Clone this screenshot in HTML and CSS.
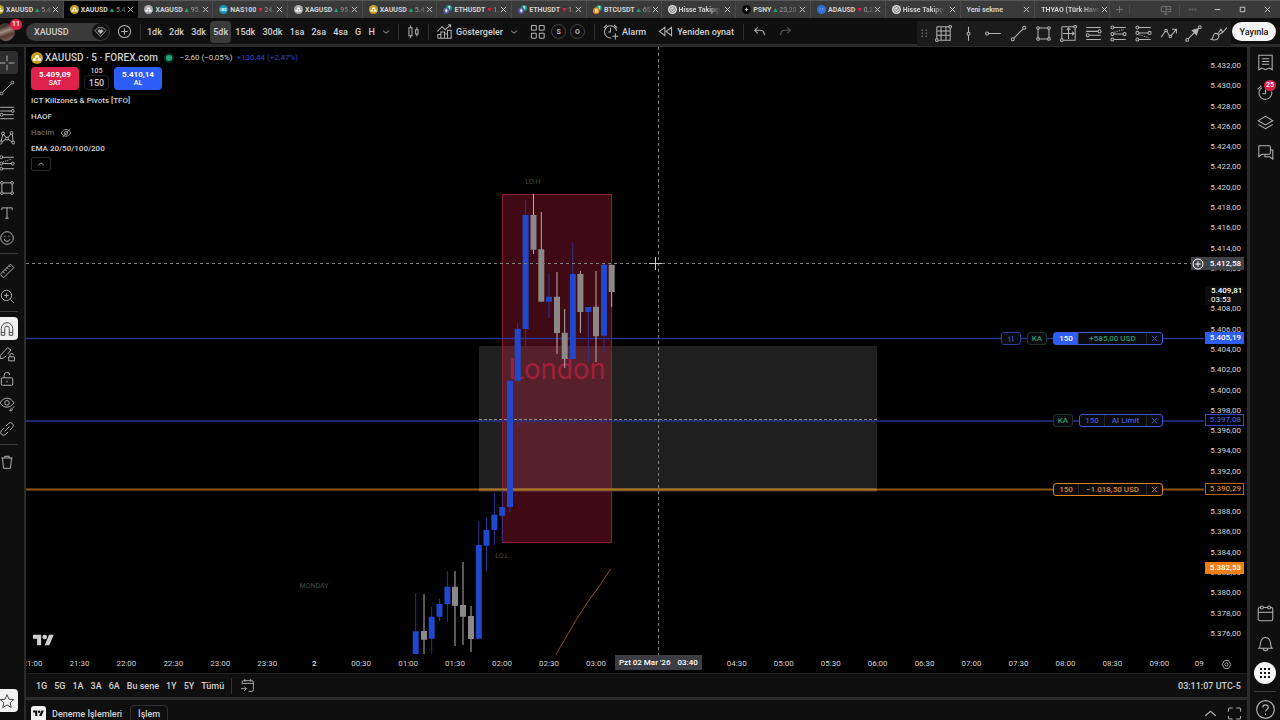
FILE: index.html
```html
<!DOCTYPE html>
<html lang="tr">
<head>
<meta charset="utf-8">
<title>XAUUSD</title>
<link rel="stylesheet" href="styles.css">
</head>
<body>
<svg class="sprite" aria-hidden="true">
  <symbol id="i-x" viewBox="0 0 10 10"><path d="M2 2l6 6M8 2l-6 6"/></symbol>
  <symbol id="i-chev" viewBox="0 0 10 10"><path d="M1.500 3.500L5 6.500l3.500-3"/></symbol>
  <symbol id="i-up" viewBox="0 0 10 10"><path d="M1.500 6.500L5 3.500l3.500 3"/></symbol>
  <symbol id="i-swap" viewBox="0 0 10 10"><path d="M3 9V2L1.500 3.500M7 1v7l1.500-1.500"/></symbol>
  <symbol id="i-gold" viewBox="0 0 18 18"><circle cx="9" cy="9" r="9" fill="#c8a021" stroke="none"/><path d="M7 5h4l1.500 3.500h-7zM3.500 9.500h4L9 13H2.500zM10.500 9.500h4l1 3.500H9.500z" fill="#fff" stroke="none"/></symbol>
  <symbol id="i-silver" viewBox="0 0 18 18"><circle cx="9" cy="9" r="9" fill="#a9a9ab" stroke="none"/><path d="M7 5h4l1.500 3.500h-7zM3.500 9.500h4L9 13H2.500zM10.500 9.500h4l1 3.500H9.500z" fill="#fff" stroke="none"/></symbol>
  <symbol id="i-nas" viewBox="0 0 18 18"><circle cx="9" cy="9" r="9" fill="#1298b4" stroke="none"/><path d="M4 6.500v5M6.500 6.500h2.500v5H6.500zM11.500 6.500H14v5h-2.500z" stroke="#fff" stroke-width="1.500"/></symbol>
  <symbol id="i-eth" viewBox="0 0 18 18"><circle cx="12" cy="6" r="6" fill="#1b9c80" stroke="none"/><path d="M10 3.500h5M12.500 3.500v5" stroke="#fff" stroke-width="1.500"/><circle cx="6.500" cy="11.500" r="6.500" fill="#51549c" stroke="none"/><path d="M6.500 6.500l3 5-3 4-3-4z" fill="#e4e4f2" stroke="none"/></symbol>
  <symbol id="i-btc" viewBox="0 0 18 18"><circle cx="12" cy="6" r="6" fill="#1b9c80" stroke="none"/><path d="M10 3.500h5M12.500 3.500v5" stroke="#fff" stroke-width="1.500"/><circle cx="6.500" cy="11.500" r="6.500" fill="#e08a20" stroke="none"/><path d="M5 8.500v6h2.500a1.500 1.500 0 0 0 0-3H5h2.200a1.500 1.500 0 0 0 0-3z" stroke="#fff" stroke-width="1.300"/></symbol>
  <symbol id="i-site" viewBox="0 0 18 18"><circle cx="9" cy="9" r="9" fill="#d8d8d8" stroke="none"/><circle cx="9" cy="9" r="5.500" stroke="#333"/><path d="M6.500 9l2 2 3.500-4" stroke="#333" stroke-width="1.500"/></symbol>
  <symbol id="i-psny" viewBox="0 0 18 18"><circle cx="9" cy="9" r="9" fill="#090909" stroke="none"/><path d="M9 4l1.200 3.800L14 9l-3.800 1.200L9 14l-1.200-3.800L4 9l3.800-1.200z" fill="#ddd" stroke="none"/></symbol>
  <symbol id="i-ada" viewBox="0 0 18 18"><circle cx="9" cy="9" r="9" fill="#2f6fd4" stroke="none"/><circle cx="9" cy="9" r="3" stroke="#9cc0ff" stroke-dasharray="1.500 2" stroke-width="2"/></symbol>
  <symbol id="i-tv" viewBox="0 0 36 28"><path d="M14 22H7V11H0V4h14zM28 22h-8l7.500-18h8z" fill="currentColor" stroke="none"/><circle cx="20" cy="8" r="4" fill="currentColor" stroke="none"/></symbol>

  <symbol id="i-cross" viewBox="0 0 28 28"><path d="M14 1v10M14 17v10M1 14h10M17 14h10"/></symbol>
  <symbol id="i-line" viewBox="0 0 28 28"><circle cx="4.500" cy="23.500" r="2.500"/><circle cx="23.500" cy="4.500" r="2.500"/><path d="M6.500 21.500l15-15"/></symbol>
  <symbol id="i-fib" viewBox="0 0 28 28"><path d="M2 4h24M2 10.500h20M7 17h19M2 24h24" /><circle cx="4.500" cy="17" r="2.500"/><circle cx="24" cy="10.500" r="2.500"/></symbol>
  <symbol id="i-pattern" viewBox="0 0 28 28"><path d="M3 22L7 7l7 8 9-10 2 17-11-7z"/><circle cx="3" cy="22" r="2.500" fill="#0f0f0f"/><circle cx="7" cy="6" r="2.500" fill="#0f0f0f"/><circle cx="14" cy="15" r="2.500" fill="#0f0f0f"/><circle cx="22" cy="5" r="2.500" fill="#0f0f0f"/><circle cx="25" cy="22" r="2.500" fill="#0f0f0f"/></symbol>
  <symbol id="i-proj" viewBox="0 0 28 28"><path d="M6 4h20M6 15h16M6 24h20"/><path d="M7 12l16-5" stroke-dasharray="2 2"/><circle cx="4" cy="4" r="2.500"/><circle cx="4" cy="15" r="2.500"/><circle cx="24" cy="15" r="2.500"/><circle cx="4" cy="24" r="2.500"/></symbol>
  <symbol id="i-proj2" viewBox="0 0 28 28"><path d="M6 4h20M6 13h16M6 24h20"/><path d="M7 16l16 5" stroke-dasharray="2 2"/><circle cx="4" cy="4" r="2.500"/><circle cx="4" cy="13" r="2.500"/><circle cx="24" cy="13" r="2.500"/><circle cx="4" cy="24" r="2.500"/></symbol>
  <symbol id="i-rect" viewBox="0 0 28 28"><path d="M7 5h14M7 23h14M5 7v14M23 7v14"/><circle cx="5" cy="5" r="2.200"/><circle cx="23" cy="5" r="2.200"/><circle cx="5" cy="23" r="2.200"/><circle cx="23" cy="23" r="2.200"/></symbol>
  <symbol id="i-text" viewBox="0 0 28 28"><path d="M5 9V5h18v4M14 5v18M11 23h6"/></symbol>
  <symbol id="i-smile" viewBox="0 0 28 28"><circle cx="14" cy="14" r="11"/><path d="M9 16c1 5 9 5 10 0M10.500 10v2M17.500 10v2"/></symbol>
  <symbol id="i-ruler" viewBox="0 0 28 28"><path d="M2 20L20 2l6 6L8 26zM7 15l3 3M10.500 11.500l2.500 2.500M14 8l3 3M17.500 4.500L20 7"/></symbol>
  <symbol id="i-zoom" viewBox="0 0 28 28"><circle cx="13" cy="13" r="9"/><path d="M20 20l6 6M9 13h8M13 9v8"/></symbol>
  <symbol id="i-magnet" viewBox="0 0 28 28"><path d="M4 25V13a10 10 0 0 1 20 0v12h-6V13a4 4 0 0 0-8 0v12zM4 20h6M18 20h6"/></symbol>
  <symbol id="i-penlock" viewBox="0 0 28 28"><path d="M13 17l-5 4-6 1 0-5L15 3l6 4-6 7M17 19h10v7H17zM19 19v-3a3 3 0 0 1 6 0"/></symbol>
  <symbol id="i-lock" viewBox="0 0 28 28"><rect x="4" y="12" width="20" height="13" rx="2"/><path d="M9 12V8a5 5 0 0 1 10-1M14 17v3" /></symbol>
  <symbol id="i-eye" viewBox="0 0 28 28"><path d="M2 12c6-11 18-11 24 0-6 10-18 10-24 0z"/><circle cx="14" cy="12" r="4"/><path d="M19 26c0-4 3-4 4-3s1 3-4 3zM23 22l4-4"/></symbol>
  <symbol id="i-link" viewBox="0 0 28 28"><path d="M12 9l5-5a5 5 0 0 1 7 7l-5 5M16 19l-5 5a5 5 0 0 1-7-7l5-5M10 18l8-8"/></symbol>
  <symbol id="i-trash" viewBox="0 0 28 28"><path d="M4 7h20M10 7V4h8v3M6 7l2 18h12l2-18"/></symbol>
  <symbol id="i-star" viewBox="0 0 28 28"><path d="M14 3l3.500 8 8.500.5-6.500 5.500 2 8.500L14 21l-7.500 4.500 2-8.500L2 11.500l8.500-.5z"/></symbol>

  <symbol id="i-heart" viewBox="0 0 28 28"><path d="M8 6h12l6 6-12 13L2 12z"/><path d="M14 19l-5-5a2.500 2.500 0 0 1 5-2 2.500 2.500 0 0 1 5 2z" fill="currentColor"/></symbol>
  <symbol id="i-plus" viewBox="0 0 28 28"><circle cx="14" cy="14" r="10"/><path d="M14 8.500v11M8.500 14h11"/></symbol>
  <symbol id="i-candles" viewBox="0 0 28 28"><path d="M6.500 8h5v13h-5zM9 4v4M9 21v4M17.500 11h4v7h-4zM19.500 7v4M19.500 18v4"/></symbol>
  <symbol id="i-ind" viewBox="0 0 28 28"><path d="M2 14l8-8 5 5 9-8M20 3h4v4M3 25v-6h5v6M8 25V15h6v10M14 25v-7h5v7M19 25V12h6v13zM3 25h22"/></symbol>
  <symbol id="i-layout" viewBox="0 0 28 28"><rect x="4" y="4" width="8" height="8" rx="1"/><rect x="17" y="4" width="8" height="8" rx="1"/><rect x="4" y="17" width="8" height="8" rx="1"/><rect x="17" y="17" width="8" height="8" rx="1"/></symbol>
  <symbol id="i-alarm" viewBox="0 0 28 28"><path d="M24 13A10 10 0 1 0 15 24.500M14 8v7h-4M3 8l5-5M25 8l-5-5M22 17v10M17 22h10"/></symbol>
  <symbol id="i-replay" viewBox="0 0 28 28"><path d="M13 7v14l-9-7zM24 7v14l-9-7z"/></symbol>
  <symbol id="i-undo" viewBox="0 0 28 28"><path d="M11 7l-5 5 5 5M6 12h9c5 0 7 3 7 8"/></symbol>
  <symbol id="i-redo" viewBox="0 0 28 28"><path d="M17 7l5 5-5 5M22 12h-9c-5 0-7 3-7 8"/></symbol>
  <symbol id="i-drag" viewBox="0 0 28 28"><g fill="currentColor" stroke="none"><path d="M9 6h3v3H9zM17 6h3v3h-3zM9 12h3v3H9zM17 12h3v3h-3zM9 18h3v3H9zM17 18h3v3h-3z"/></g></symbol>
  <symbol id="i-grid" viewBox="0 0 28 28"><path d="M3 3h20M3 10h23M3 17h23M6 25h20M3 3v20M10 3v22M18 3v22M25 6v19"/><circle cx="25" cy="3" r="2.200"/><circle cx="3" cy="25" r="2.200"/></symbol>
  <symbol id="i-vline" viewBox="0 0 28 28"><path d="M14 3v9M14 17v9"/><circle cx="14" cy="14.500" r="2.500"/></symbol>
  <symbol id="i-hline" viewBox="0 0 28 28"><path d="M6 14h20"/><circle cx="3.500" cy="14" r="2.500"/></symbol>
  <symbol id="i-range" viewBox="0 0 28 28"><path d="M3 3h20M25 6v19H6M3 3v20M14 5v18M5 14h18M11 8l3-3 3 3M20 11l3 3-3 3"/><circle cx="25" cy="3" r="2.200"/><circle cx="3" cy="25" r="2.200"/></symbol>
  <symbol id="i-zig" viewBox="0 0 28 28"><path d="M2 20l7-10M11 10l5 8M18 18l8-10M20 7h7v7"/><circle cx="10" cy="9" r="2"/><circle cx="17" cy="19" r="2"/></symbol>
  <symbol id="i-arrow" viewBox="0 0 28 28"><path d="M5 23L18 10"/><circle cx="3.500" cy="24.500" r="2.200"/><circle cx="24.500" cy="3.500" r="2.200"/><path d="M22 6l-3 10-7-7z" fill="currentColor"/></symbol>
  <symbol id="i-brush" viewBox="0 0 28 28"><path d="M2 24c4-2 2-8 6-10 4-1 8 3 6 7-2 4-8 4-12 3zM13 14L18 7l3 5 7-8M14 16l7-4"/></symbol>
  <symbol id="i-list" viewBox="0 0 28 28"><path d="M3 2h22v24l-5-3-6 3-6-3-5 3zM8 8h12M8 12.500h12M8 17h12"/></symbol>
  <symbol id="i-clock" viewBox="0 0 28 28"><path d="M8 6a10.500 10.500 0 1 0 16 6M14 9v7H9M1 9l6-6"/></symbol>
  <symbol id="i-layers" viewBox="0 0 28 28"><path d="M14 4l12 7-12 7L2 11zM2 17l12 7 12-7"/></symbol>
  <symbol id="i-chat" viewBox="0 0 28 28"><path d="M4 3h16a2 2 0 0 1 2 2v10a2 2 0 0 1-2 2H8l-5 4V5a2 2 0 0 1 1-2zM22 10h4v15l-5-4h-8v-4"/></symbol>
  <symbol id="i-cal" viewBox="0 0 28 28"><rect x="2" y="4" width="24" height="22" rx="3"/><path d="M2 12h24"/><circle cx="8" cy="4" r="2.500" fill="#0f0f0f"/><circle cx="20" cy="4" r="2.500" fill="#0f0f0f"/></symbol>
  <symbol id="i-bell" viewBox="0 0 28 28"><path d="M3 22c3-3 2-6 3-10 1-5 4-8 8-8s7 3 8 8 0 7 3 10zM10 23c1 4 7 4 8 0"/></symbol>
  <symbol id="i-apps" viewBox="0 0 28 28"><g fill="#111" stroke="none"><path d="M4 4h4v4H4zM12 4h4v4h-4zM20 4h4v4h-4zM4 12h4v4H4zM12 12h4v4h-4zM20 12h4v4h-4zM4 20h4v4H4zM12 20h4v4h-4zM20 20h4v4h-4z"/></g></symbol>
  <symbol id="i-help" viewBox="0 0 28 28"><circle cx="14" cy="14" r="13"/><path d="M10 11c0-5 8-5 8 0 0 3-4 3-4 6M14 20v2"/></symbol>
  <symbol id="i-hide" viewBox="0 0 28 28"><path d="M3 14c5-11 17-11 22 0-5 10-17 10-22 0zM6 24L24 4"/><circle cx="14" cy="14" r="4"/></symbol>
  <symbol id="i-goto" viewBox="0 0 28 28"><path d="M4 12V7a2 2 0 0 1 2-2h16a3 3 0 0 1 3 3v14a3 3 0 0 1-3 3h-6M5 10h20M9 2v5M20 2v5M2 20h10M8 16l4 4-4 4"/></symbol>
  <symbol id="i-gear" viewBox="0 0 28 28"><path d="M9 4h10l6 10-6 10H9L3 14z"/><circle cx="14" cy="14" r="4"/></symbol>
  <symbol id="i-full" viewBox="0 0 28 28"><path d="M4 11V7a2 2 0 0 1 2-2h5M17 5h5a2 2 0 0 1 2 2v4M24 18v3a2 2 0 0 1-2 2h-5M11 23H6a2 2 0 0 1-2-2v-3"/></symbol>
  <symbol id="i-mon" viewBox="0 0 28 28"><path d="M14 18H3V6h22v12h-8M14 6v18M10 24h8M14 12h11"/></symbol>
  <symbol id="i-dots" viewBox="0 0 28 28"><circle cx="5" cy="14" r="2.500"/><circle cx="14" cy="14" r="2.500"/><circle cx="23" cy="14" r="2.500"/></symbol>
</svg>

<nav class="tabs">
  <div class="tab-list">
    <a class="tab" href="#"><svg class="logo"><use href="#i-gold"/></svg><b>XAUUSD</b><i class="up">▲</i><em>5.4</em><svg class="x"><use href="#i-x"/></svg></a>
    <a class="tab on" href="#"><svg class="logo"><use href="#i-gold"/></svg><b>XAUUSD</b><i class="up">▲</i><em>5.4</em><svg class="x"><use href="#i-x"/></svg></a>
    <a class="tab" href="#"><svg class="logo"><use href="#i-silver"/></svg><b>XAGUSD</b><i class="up">▲</i><em>95.</em><svg class="x"><use href="#i-x"/></svg></a>
    <a class="tab" href="#"><svg class="logo"><use href="#i-nas"/></svg><b>NAS100</b><i class="down">▼</i><em>24.</em><svg class="x"><use href="#i-x"/></svg></a>
    <a class="tab" href="#"><svg class="logo"><use href="#i-silver"/></svg><b>XAGUSD</b><i class="up">▲</i><em>95.</em><svg class="x"><use href="#i-x"/></svg></a>
    <a class="tab" href="#"><svg class="logo"><use href="#i-gold"/></svg><b>XAUUSD</b><i class="up">▲</i><em>5.4</em><svg class="x"><use href="#i-x"/></svg></a>
    <a class="tab" href="#"><svg class="logo"><use href="#i-eth"/></svg><b>ETHUSDT</b><i class="down">▼</i><em>1.</em><svg class="x"><use href="#i-x"/></svg></a>
    <a class="tab" href="#"><svg class="logo"><use href="#i-eth"/></svg><b>ETHUSDT</b><i class="down">▼</i><em>1.</em><svg class="x"><use href="#i-x"/></svg></a>
    <a class="tab" href="#"><svg class="logo"><use href="#i-btc"/></svg><b>BTCUSDT</b><i class="up">▲</i><em>65</em><svg class="x"><use href="#i-x"/></svg></a>
    <a class="tab" href="#"><svg class="logo"><use href="#i-site"/></svg><b class="fade">Hisse Takipçi</b><svg class="x"><use href="#i-x"/></svg></a>
    <a class="tab" href="#"><svg class="logo"><use href="#i-psny"/></svg><b>PSNY</b><i class="up">▲</i><em>23,28</em><svg class="x"><use href="#i-x"/></svg></a>
    <a class="tab" href="#"><svg class="logo"><use href="#i-ada"/></svg><b>ADAUSD</b><i class="down">▼</i><em>0,2</em><svg class="x"><use href="#i-x"/></svg></a>
    <a class="tab" href="#"><svg class="logo"><use href="#i-site"/></svg><b class="fade">Hisse Takipçi</b><svg class="x"><use href="#i-x"/></svg></a>
    <a class="tab" href="#"><b>Yeni sekme</b><svg class="x"><use href="#i-x"/></svg></a>
    <a class="tab" href="#"><b class="fade">THYAO (Türk Hava</b><svg class="x"><use href="#i-x"/></svg></a>
  </div>
  <div class="win">
    <button aria-label="Yeni sekme aç" class="dim"><svg viewBox="0 0 10 10"><path d="M5 1v8M1 5h8"/></svg></button>
    <button aria-label="Ekran" class="dim mon"><svg><use href="#i-mon"/></svg></button>
    <button aria-label="Diğer" class="dim"><svg><use href="#i-dots"/></svg></button>
    <button aria-label="Küçült"><svg viewBox="0 0 10 10"><path d="M2 5h6"/></svg></button>
    <button aria-label="Büyüt"><svg viewBox="0 0 10 10"><path d="M2.500 2.500h5v5h-5z"/></svg></button>
    <button aria-label="Kapat"><svg><use href="#i-x"/></svg></button>
  </div>
</nav>

<header class="top">
  <button class="avatar" aria-label="Profil"><span>11</span></button>
  <button class="search">XAUUSD<svg class="ic"><use href="#i-heart"/></svg></button>
  <button class="tb plus" aria-label="Karşılaştır"><svg class="ic"><use href="#i-plus"/></svg></button>
  <span class="sep"></span>
  <div class="ints">
    <button>1dk</button><button>2dk</button><button>3dk</button><button class="on">5dk</button><button>15dk</button><button>30dk</button><button>1sa</button><button>2sa</button><button>4sa</button><button>G</button><button>H</button>
    <button class="more" aria-label="Aralıklar"><svg class="chev"><use href="#i-chev"/></svg></button>
  </div>
  <span class="sep"></span>
  <button class="tb wide" aria-label="Mumlar"><svg class="ic"><use href="#i-candles"/></svg></button>
  <span class="sep"></span>
  <button class="tb ind"><svg class="ic"><use href="#i-ind"/></svg>Göstergeler</button>
  <button class="tb small" aria-label="Favoriler"><svg class="chev"><use href="#i-chev"/></svg></button>
  <button class="tb small" aria-label="Şablonlar"><svg class="ic"><use href="#i-layout"/></svg></button>
  <button class="ring">S</button><button class="ring">O</button>
  <span class="sep gap"></span>
  <button class="tb"><svg class="ic"><use href="#i-alarm"/></svg>Alarm</button>
  <button class="tb replay"><svg class="ic"><use href="#i-replay"/></svg>Yeniden oynat</button>
  <span class="sep"></span>
  <button class="tb undo" aria-label="Geri al"><svg class="ic"><use href="#i-undo"/></svg></button>
  <button class="tb dim" aria-label="Yinele"><svg class="ic"><use href="#i-redo"/></svg></button>
  <div class="draw">
    <svg class="ic drag"><use href="#i-drag"/></svg>
    <button aria-label="Izgara"><svg class="ic"><use href="#i-grid"/></svg></button>
    <button aria-label="Dikey çizgi"><svg class="ic"><use href="#i-vline"/></svg></button>
    <button aria-label="Yatay ışın"><svg class="ic"><use href="#i-hline"/></svg></button>
    <button aria-label="Trend çizgisi"><svg class="ic"><use href="#i-line"/></svg></button>
    <button aria-label="Dikdörtgen"><svg class="ic"><use href="#i-rect"/></svg></button>
    <button aria-label="Fiyat aralığı"><svg class="ic"><use href="#i-range"/></svg></button>
    <button aria-label="Fib"><svg class="ic"><use href="#i-fib"/></svg></button>
    <button aria-label="Uzun pozisyon"><svg class="ic"><use href="#i-proj"/></svg></button>
    <button aria-label="Kısa pozisyon"><svg class="ic"><use href="#i-proj2"/></svg></button>
    <button aria-label="Yol"><svg class="ic"><use href="#i-zig"/></svg></button>
    <button aria-label="Ok"><svg class="ic"><use href="#i-arrow"/></svg></button>
    <button aria-label="Fırça"><svg class="ic"><use href="#i-brush"/></svg></button>
  </div>
  <button class="publish">Yayınla</button>
</header>

<div class="body">
  <aside class="left">
    <button class="hov" aria-label="İmleç"><svg class="ic"><use href="#i-cross"/></svg></button>
    <button aria-label="Çizgiler"><svg class="ic"><use href="#i-line"/></svg></button>
    <button aria-label="Fibonacci"><svg class="ic"><use href="#i-fib"/></svg></button>
    <button aria-label="Formasyonlar"><svg class="ic"><use href="#i-pattern"/></svg></button>
    <button aria-label="Tahmin"><svg class="ic"><use href="#i-proj"/></svg></button>
    <button aria-label="Şekiller"><svg class="ic"><use href="#i-rect"/></svg></button>
    <button aria-label="Metin"><svg class="ic"><use href="#i-text"/></svg></button>
    <button aria-label="İkonlar"><svg class="ic"><use href="#i-smile"/></svg></button>
    <hr>
    <button aria-label="Ölç"><svg class="ic"><use href="#i-ruler"/></svg></button>
    <button aria-label="Yakınlaştır"><svg class="ic"><use href="#i-zoom"/></svg></button>
    <hr>
    <button class="white" aria-label="Mıknatıs"><svg class="ic"><use href="#i-magnet"/></svg></button>
    <button aria-label="Çizim modu"><svg class="ic"><use href="#i-penlock"/></svg></button>
    <button aria-label="Kilitle"><svg class="ic"><use href="#i-lock"/></svg></button>
    <button aria-label="Gizle"><svg class="ic"><use href="#i-eye"/></svg></button>
    <button aria-label="Bağla"><svg class="ic"><use href="#i-link"/></svg></button>
    <hr>
    <button aria-label="Sil"><svg class="ic"><use href="#i-trash"/></svg></button>
    <button class="white last" aria-label="Favori"><svg class="ic"><use href="#i-star"/></svg></button>
  </aside>

  <div class="center">
    <main class="chart">
      <div class="plot">
        <svg class="canvas" role="img" aria-label="XAUUSD grafiği">
          <g transform="translate(-26 -47)">
            <rect class="band" x="479" y="346" width="398" height="146"/>
            <rect class="zone" x="502.500" y="194.500" width="109" height="348"/>
            <text class="london" x="557" y="379">London</text>
            <path class="pos" d="M26 338.500H4000M26 421H4000"/>
            <path class="stop" d="M26 489.500H4000"/>
            <path class="stop-hi" d="M479 489.500H877"/>
            <path class="mid" d="M479 419.500H877"/>
            <path class="wick-b" d="M415.700 593V654M431.700 607V654M439.500 599V621M447.400 571V622M478.800 521V639M486.500 518V571M494.400 493V545M502.200 490V543M510 380V512M517.700 323V428M525.600 200V346M549 273V318M572.800 243V359M588.300 307V362M604 263V352"/>
            <path class="wick-g" d="M424 594V654M455 571V646M463 562V645M471 606V652M533.500 194V254M541.300 212V301M557 272V354M564.700 309V368M580.400 271V333M596 271V362M611.700 265V307"/>
            <path class="bar-b" d="M415.700 631.300V654M431.700 616.700V638.700M439.500 604V616.700M447.400 586.700V604.300M478.800 545V638.700M486.500 530V545.700M494.400 514.700V530M502.200 507V515.700M510 380.700V507M517.700 328.700V380.700M525.600 215V329M549 296.700V301.700M572.800 274V359M588.300 307V312M604 264.700V335.700"/>
            <path class="bar-g" d="M424 631V639.700M455 586.700V605.700M463 605V616.700M471 616V639M533.500 215V249.700M541.300 249.300V301.700M557 296.700V333M564.700 332.700V359M580.400 274V312M596 306.700V336.300M611.700 264.700V292"/>
            <path class="ema" d="M556 654.500L576 620 589 600 598 588 611 568.500"/>
            <path class="dash" d="M26 263.500H4000M658.500 47V2000"/>
            <path class="cursor" d="M655.500 257v13M649 263.500h13"/>
            <text class="note" x="533" y="184">LO.H</text>
            <text class="note" x="502" y="558">LO.L</text>
            <text class="note" x="314" y="588">MONDAY</text>
          </g>
        </svg>

        <section class="legend">
          <h1><svg class="gold"><use href="#i-gold"/></svg>XAUUSD · 5 · FOREX.com<span class="dot"></span><small>−2,60 (−0,05%)</small><small class="blue">+130,44 (+2,47%)</small></h1>
          <div class="trade">
            <button class="sell"><b>5.409,09</b>SAT</button>
            <div class="qty"><span>105</span><button>150</button></div>
            <button class="buy"><b>5.410,14</b>AL</button>
          </div>
          <p>ICT Killzones &amp; Pivots [TFO]</p>
          <p>HAOF</p>
          <p class="off">Hacim<svg><use href="#i-hide"/></svg></p>
          <p>EMA 20/50/100/200</p>
          <button class="fold" aria-label="Göstergeleri gizle"><svg class="chev"><use href="#i-up"/></svg></button>
        </section>

        <svg class="mark"><use href="#i-tv"/></svg>

        <div class="order o1">
          <button class="box" aria-label="Tersine çevir"><svg><use href="#i-swap"/></svg></button><span class="box ka">KA</span>
          <div class="tag"><b class="fill">150</b><span class="green">+585,00 USD</span><button aria-label="Kapat"><svg><use href="#i-x"/></svg></button></div>
        </div>
        <div class="order o2">
          <span class="box ka">KA</span>
          <div class="tag"><b>150</b><span class="short">Al Limit</span><button aria-label="İptal"><svg><use href="#i-x"/></svg></button></div>
        </div>
        <div class="order o3">
          <div class="tag"><b>150</b><span>−1.018,50 USD</span><button aria-label="İptal"><svg><use href="#i-x"/></svg></button></div>
        </div>
      </div>

      <div class="prices">
        <span>5.432,00</span><span>5.430,00</span><span>5.428,00</span><span>5.426,00</span><span>5.424,00</span><span>5.422,00</span><span>5.420,00</span><span>5.418,00</span><span>5.416,00</span><span>5.414,00</span><span>5.412,00</span><span class="none"></span><span>5.408,00</span><span>5.406,00</span><span>5.404,00</span><span>5.402,00</span><span>5.400,00</span><span>5.398,00</span><span>5.396,00</span><span>5.394,00</span><span>5.392,00</span><span class="none"></span><span>5.388,00</span><span>5.386,00</span><span>5.384,00</span><span>5.382,00</span><span>5.380,00</span><span>5.378,00</span><span>5.376,00</span>
        <div class="lab cur"><svg><use href="#i-plus"/></svg>5.412,58</div>
        <div class="lab last">5.409,81<br><small>03:53</small></div>
        <div class="lab l1">5.405,19</div>
        <div class="lab l2">5.397,08</div>
        <div class="lab l3">5.390,29</div>
        <div class="lab l4">5.382,53</div>
      </div>

      <div class="times">
        <div class="ticks">
          <span>21:00</span><span>21:30</span><span>22:00</span><span>22:30</span><span>23:00</span><span>23:30</span><span><b>2</b></span><span>00:30</span><span>01:00</span><span>01:30</span><span>02:00</span><span>02:30</span><span>03:00</span><span></span><span></span><span>04:30</span><span>05:00</span><span>05:30</span><span>06:00</span><span>06:30</span><span>07:00</span><span>07:30</span><span>08:00</span><span>08:30</span><span>09:00</span><span class="cut">09</span>
        </div>
        <div class="when"><span>Pzt 02 Mar '26</span><span>03:40</span></div>
      </div>
      <button class="axis-set" aria-label="Eksen ayarları"><svg><use href="#i-gear"/></svg></button>
    </main>

    <div class="ranges">
      <button>1G</button><button>5G</button><button>1A</button><button>3A</button><button>6A</button><button>Bu sene</button><button>1Y</button><button>5Y</button><button>Tümü</button>
      <span class="sep"></span>
      <button aria-label="Tarihe git"><svg class="ic"><use href="#i-goto"/></svg></button>
      <button class="clock">03:11:07 UTC-5</button>
    </div>

    <footer class="foot">
      <div class="foot-in">
        <span class="tv"><svg><use href="#i-tv"/></svg></span>
        <button class="paper">Deneme İşlemleri</button>
        <button class="deal">İşlem</button>
        <button class="open" aria-label="Paneli aç"><svg class="ic"><use href="#i-up"/></svg></button>
        <button aria-label="Tam ekran"><svg class="ic"><use href="#i-full"/></svg></button>
      </div>
    </footer>
  </div>

  <aside class="right">
    <button aria-label="İzleme listesi"><svg class="ic"><use href="#i-list"/></svg></button>
    <button aria-label="Alarmlar"><svg class="ic"><use href="#i-clock"/></svg><span class="badge">25</span></button>
    <button aria-label="Katmanlar"><svg class="ic"><use href="#i-layers"/></svg></button>
    <button aria-label="Sohbet"><svg class="ic"><use href="#i-chat"/></svg></button>
    <button class="push" aria-label="Takvim"><svg class="ic"><use href="#i-cal"/></svg></button>
    <button aria-label="Bildirimler"><svg class="ic"><use href="#i-bell"/></svg></button>
    <button class="apps" aria-label="Ürünler"><svg><use href="#i-apps"/></svg></button>
    <hr>
    <button aria-label="Yardım"><svg class="ic"><use href="#i-help"/></svg></button>
  </aside>
</div>
</body>
</html>
```

FILE: styles.css
```css
* { box-sizing: border-box; }
body {
  margin: 0;
  height: 100vh;
  display: flex;
  flex-direction: column;
  overflow: hidden;
  background: #0f0f0f;
  color: #d0d0d0;
  font: 500 9px/12px Roboto, "Open Sans", sans-serif;
}
button {
  display: flex;
  align-items: center;
  justify-content: center;
  flex: none;
  margin: 0;
  padding: 0;
  border: 0;
  background: none;
  color: inherit;
  font: inherit;
  white-space: nowrap;
}
svg { fill: none; stroke: currentColor; flex: none; }
.sprite { position: absolute; width: 0; height: 0; }
.ic { width: 17px; height: 17px; color: #b4b4b4; stroke-width: 1.7; }
.chev { width: 8px; height: 8px; }
.sep { width: 1px; height: 16px; background: #333; flex: none; }

/* Window tabs */
.tabs {
  display: flex;
  height: 18px;
  flex: none;
  background: #3a3a3a;
  border-top: 1px solid #585858;
}
.tab-list { display: flex; flex: 1; min-width: 0; margin-left: -11px; }
.tab {
  display: flex;
  align-items: center;
  flex: 1;
  min-width: 0;
  padding: 0 3px 0 6px;
  border-right: 1px solid #4a4a4a;
  color: #d0d0d0;
  font-size: 7px;
  line-height: 10px;
  text-decoration: none;
  white-space: nowrap;
}
.tab.on { background: #050505; border-color: #050505; }
.tab b { font-weight: 700; }
.tab i { width: 8px; font-size: 7px; font-style: normal; text-align: center; flex: none; }
.tab em { color: #8a8a8a; font-style: normal; mask-image: linear-gradient(90deg, #000 40%, #0006); }
.fade { mask-image: linear-gradient(90deg, #000 70%, transparent); }
.up { color: #22a077; }
.down { color: #d9204a; }
.logo { width: 9px; height: 9px; margin-right: 2px; }
.x { width: 9px; height: 9px; margin-left: auto; }
.win { display: flex; align-items: center; width: 170px; flex: none; }
.win button { width: 25px; }
.win svg { width: 9px; height: 9px; }
.win .dim { color: #777; }
.win button:first-child { width: 20px; border-right: 1px solid #4a4a4a; }
.win .mon { width: 50px; padding-left: 22px; border-right: 1px solid #4a4a4a; }
.win .mon svg { width: 12px; height: 12px; }
.win .dim svg { stroke-width: 2; }
.win .dim:first-child svg { stroke-width: 1; }

/* Header */
.top {
  display: flex;
  align-items: center;
  height: 29px;
  flex: none;
  padding-top: 1px;
  border-bottom: 3px solid #2b2b2b;
  background: #0f0f0f;
}
.avatar {
  position: relative;
  width: 18px;
  height: 18px;
  margin-left: -3px;
  border-radius: 50%;
  background: linear-gradient(160deg, #40352f 25%, #a08c80 45%, #54382f 65%, #8d7d74);
}
.avatar span, .badge {
  position: absolute;
  top: -4px;
  left: 13px;
  padding: 0 2px;
  min-width: 12px;
  height: 11px;
  border-radius: 6px;
  background: #dc2148;
  color: #fff;
  font-size: 7px;
  line-height: 11px;
}
.search {
  justify-content: space-between;
  width: 84px;
  height: 18px;
  margin-left: 11px;
  padding: 0 1px 0 8px;
  border-radius: 9px;
  background: #3a3a3a;
}
.search .ic { padding: 2px; border-radius: 50%; background: #141414; }
.tb { gap: 3px; height: 22px; }
.plus { width: 28px; }
.sep + .ints { margin-left: 3px; }
.plus + .sep { margin-left: 2px; }
.ints { display: flex; width: 254px; justify-content: space-between; }
.ints button { height: 22px; padding: 0 3px; }
.ints .more { padding: 0 8px 0 3px; }
.ints .on { border-radius: 4px; background: #3a3a3a; }
.wide { width: 29px; }
.ind { margin-left: 7px; }
.small { width: 22px; }
.small + .small { margin-left: 1px; }
.ring { width: 15px; height: 15px; margin: 0 2px; border: 1px solid #444; border-radius: 50%; font-size: 7px; }
.small + .ring { margin-left: 3px; }
.gap { margin: 0 7px; }
.replay { margin: 0 9px 0 11px; }
.undo { margin: 0 9px 0 7px; }
.tb.dim .ic { color: #5a5a5a; }
.draw {
  display: flex;
  align-items: center;
  align-self: flex-end;
  height: 25px;
  margin: 0 1px -2px auto;
  background: #1b1b1b;
}
.draw button { width: 25px; height: 22px; }
.ic.drag { width: 14px; color: #666; }
.publish {
  width: 44px;
  height: 19px;
  margin-right: 4px;
  border-radius: 10px;
  background: #f5f5f5;
  color: #161616;
}

/* Side rails */
.body { display: flex; flex: 1; min-height: 0; }
.left {
  display: flex;
  flex-direction: column;
  gap: 2px;
  width: 26px;
  flex: none;
  padding: 4px 0 8px;
  overflow: hidden;
  border-right: 2px solid #2b2b2b;
}
.left button { width: 23px; height: 23px; margin-left: -5px; border-radius: 4px; }
.left .ic { width: 16px; height: 16px; }
.left hr, .right hr { width: 18px; height: 1px; margin: 2px 0 3px; border: 0; background: #3d3d3d; flex: none; }
.left .hov { background: #2e2e2e; }
.left .white { background: #f2f2f2; }
.left .white .ic { color: #444; }
.left .last { margin-top: auto; }
.right {
  display: flex;
  flex-direction: column;
  align-items: center;
  width: 33px;
  flex: none;
  overflow: hidden;
  border-left: 3px solid #2b2b2b;
}
.right button { position: relative; width: 30px; height: 30px; }
.right .push { margin-top: auto; }
.right hr { width: 22px; margin: 3px 0 2px; }
.right button:last-child { margin-bottom: -4px; }
.right button:last-child .ic { width: 19px; height: 19px; }
.right .badge { top: 3px; left: 14px; }
.right .apps::before { content: ""; position: absolute; inset: 4px; border-radius: 50%; background: #f5f5f5; }
.apps svg { position: relative; width: 14px; height: 14px; }

/* Chart */
.center { display: flex; flex-direction: column; flex: 1; min-width: 0; }
.chart {
  display: grid;
  grid-template: minmax(0, 1fr) 18px / minmax(0, 1fr) 43px;
  flex: 1;
  min-height: 0;
  background: #000;
  font-size: 8px;
}
.plot { position: relative; }
.canvas { display: block; position: absolute; width: 100%; height: 100%; }
.zone { fill: #ff2850; fill-opacity: .25; stroke: #8a1e36; }
.band { fill: #1f1f1f; stroke: none; }
.canvas text { stroke: none; text-anchor: middle; }
.london { fill: #a01f3d; font-size: 29px; font-weight: 400; }
.note { fill: #484848; font-size: 7px; font-weight: 400; }
.pos { stroke: #2b3390; stroke-width: 1.5px; }
.stop { stroke: #8f5714; stroke-width: 2px; }
.stop-hi { stroke: #a9762e; stroke-width: 2px; }
.mid { stroke: #8d8d8d; stroke-dasharray: 3 2; }
.wick-b { stroke: #28329a; }
.wick-g { stroke: #b5aeae; }
.bar-b { stroke: #2148cc; stroke-width: 6px; }
.bar-g { stroke: #8b8888; stroke-width: 6px; }
.ema { stroke: #8f4d1c; }
.dash { stroke: #808080; stroke-dasharray: 3 3; }
.cursor { stroke: #ccc; }

.legend { position: absolute; left: 5px; top: 4px; }
.legend h1 { display: flex; align-items: center; margin: 0; font-size: 10px; font-weight: 500; line-height: 14px; }
.gold { width: 12px; height: 12px; margin-right: 2px; }
.dot { width: 6px; height: 6px; margin: 0 8px; border-radius: 50%; background: #1fa67a; box-shadow: 0 0 0 2px #0a3024; }
.legend small { margin-right: 4px; font-size: 8px; font-weight: 400; }
.legend .blue { color: #3148c8; }
.trade { display: flex; gap: 5px; margin: 2px 0 3px; }
.sell, .buy { flex-direction: column; width: 48px; height: 23px; border-radius: 4px; color: #fff; font-size: 7px; line-height: 9px; }
.sell b, .buy b { font-size: 8px; font-weight: 700; }
.sell { background: #e0214c; }
.buy { background: #2d5cf6; }
.qty { width: 25px; text-align: center; font-size: 7px; line-height: 8px; }
.qty button { width: 25px; height: 15px; border: 1px solid #242424; border-radius: 4px; font-size: 9px; }
.legend p { display: flex; align-items: center; gap: 6px; height: 16px; margin: 0; font-size: 8px; }
.legend .off { color: #666; }
.off svg { width: 12px; height: 12px; color: #aaa; stroke-width: 2; }
.fold { width: 20px; height: 14px; border: 1px solid #2c2c2c; border-radius: 2px; }
.mark { position: absolute; left: 7px; bottom: 6px; width: 21px; height: 17px; }

.order { position: absolute; right: 41px; display: flex; height: 13px; line-height: 11px; color: #4059d8; }
.o1 { top: 285px; }
.o2 { top: 367px; }
.o3 { top: 436px; color: #d8871f; }
.box { width: 20px; margin-right: 6px; border: 1px solid #2a3f9e; border-radius: 3px; background: #0b0b0f; text-align: center; }
.box svg { width: 8px; height: 8px; }
.ka { border-color: #1d3229; color: #25946b; }
.tag { display: flex; border: 1px solid; border-radius: 3px; background: #0b0b0f; }
.tag b { width: 24px; font-weight: 500; text-align: center; }
.tag .fill { background: #2d5cf6; color: #fff; }
.tag span { width: 69px; border: 1px solid #242424; border-width: 0 1px; text-align: center; }
.tag .short { width: 43px; }
.tag .green { color: #25946b; }
.tag button { width: 15px; }
.tag svg { width: 9px; height: 9px; }

.prices {
  position: relative;
  display: flex;
  flex-direction: column;
  justify-content: space-between;
  padding: 13px 6px 15px 0;
  font-weight: 400;
  text-align: right;
}
.none { height: 12px; }
.lab { position: absolute; left: 1px; right: 3px; height: 12px; padding-right: 3px; color: #fff; font-weight: 500; background: #000; }
.cur { display: flex; align-items: center; justify-content: space-between; left: -13px; top: 210px; height: 13px; background: #404147; }
.cur svg { width: 14px; height: 14px; stroke-width: 2; }
.lab.last { top: 239px; height: 19px; padding-left: 6px; background: #0c0c0c; line-height: 9px; text-align: left; }
.last small { font-size: 8px; font-weight: 400; }
.l1 { top: 285px; background: #2d5cf6; }
.l2 { top: 367px; border: 1px solid #3148c8; line-height: 10px; padding-right: 2px; color: #4059d8; }
.l3 { top: 436px; border: 1px solid #a8691a; line-height: 10px; padding-right: 2px; color: #d8871f; }
.l4 { top: 515px; background: #ee7d14; }

.times { position: relative; overflow: hidden; }
.ticks { display: flex; margin-left: -17px; line-height: 17px; font-weight: 400; text-align: center; }
.ticks span { flex: 1; min-width: 0; }
.ticks .cut { flex: 0 0 21px; text-align: right; }
.when { position: absolute; left: 589px; top: 0; display: flex; gap: 7px; height: 15px; padding: 0 4px; background: #3c3d43; color: #fff; line-height: 16px; }
.axis-set svg { width: 11px; height: 11px; margin-left: 2px; stroke-width: 2; }

/* Range and trade bars */
.ranges { display: flex; align-items: center; gap: 7px; height: 24px; flex: none; padding: 0 6px 0 10px; border-top: 1px solid #222; }
.ranges .ic { width: 15px; height: 15px; }
.ranges .sep { margin-right: 1px; }
.clock { margin-left: auto; }
.foot { height: 23px; flex: none; overflow: hidden; border-top: 3px solid #2b2b2b; }
.foot-in { display: flex; align-items: center; height: 27px; padding: 0 4px 0 5px; }
.tv { display: flex; align-items: center; justify-content: center; width: 15px; height: 16px; border-radius: 3px; background: #f2f2f2; color: #111; }
.tv svg { width: 11px; height: 9px; }
.paper { margin: 0 8px 0 6px; }
.deal { width: 38px; height: 18px; border: 1px solid #303030; border-radius: 4px; }
.open { margin: 0 8px 0 auto; }
.open .ic { width: 15px; height: 15px; stroke-width: .7; }
```
